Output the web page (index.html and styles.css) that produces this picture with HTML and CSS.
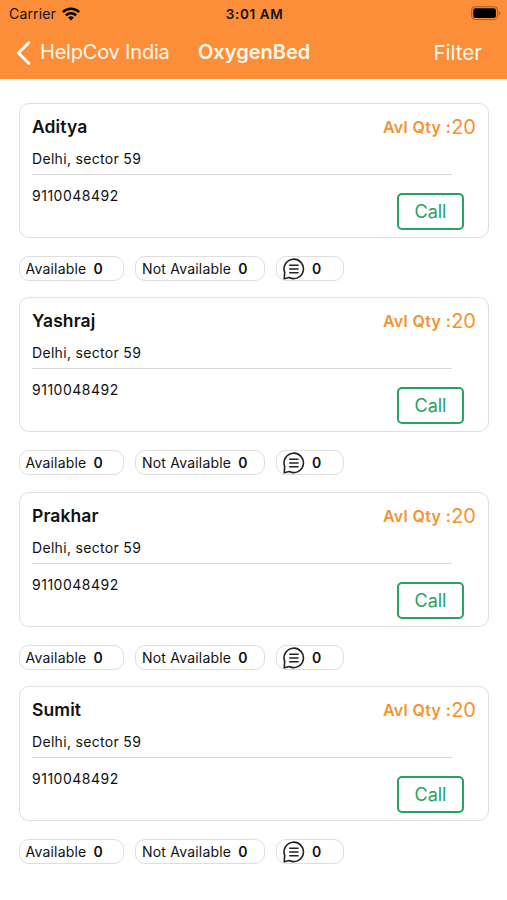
FILE: index.html
```html
<!DOCTYPE html>
<html lang="en">
<head>
<meta charset="utf-8">
<title>OxygenBed</title>
<link rel="stylesheet" href="styles.css">
</head>
<body>
<svg class="defs" width="0" height="0" aria-hidden="true">
  <symbol id="chat" viewBox="0 0 22 22">
    <path d="M1.2 20.8 1.7 14.4A9.7 9.7 0 1 1 6.3 19.5Z" fill="none" stroke="#222" stroke-width="1.6" stroke-linejoin="round"/>
    <path d="M6.2 7.2h9.4M6.2 11h9.4M6.2 14.8h9.4" fill="none" stroke="#222" stroke-width="1.5"/>
  </symbol>
</svg>
<header class="top">
  <div class="status">
    <div class="carrier"><span>Carrier</span>
      <svg width="18" height="14" viewBox="0 0 18 14"><g fill="none" stroke="#000" stroke-width="2.5"><path d="M.9 5.2a11.5 11.5 0 0 1 16.2 0"/><path d="M3.9 8.4a7.2 7.2 0 0 1 10.2 0"/></g><path d="M9 13.5 6.1 10.6a4.1 4.1 0 0 1 5.8 0Z"/></svg>
    </div>
    <span class="time">3:01 AM</span>
    <svg class="battery" width="30" height="15" viewBox="0 0 30 15"><rect x=".7" y=".7" width="25.8" height="12.8" rx="3.6" fill="none" stroke="#a65e27" stroke-width="1.1"/><rect x="2.3" y="2.3" width="22.6" height="9.6" rx="2"/><path d="M27.8 5v4.4q1.6-.7 1.6-2.2T27.8 5Z" fill="#a65e27"/></svg>
  </div>
  <nav class="nav">
    <a class="back"><svg width="15" height="24" viewBox="0 0 15 24"><path d="M12.8 1.7 2.4 12l10.4 10.3" fill="none" stroke="#fff" stroke-width="3" stroke-linecap="round" stroke-linejoin="round"/></svg><span>HelpCov India</span></a>
    <h1>OxygenBed</h1>
    <a class="filter">Filter</a>
  </nav>
</header>
<main class="list">
  <section class="entry">
    <article class="card">
      <div class="row"><h2>Aditya</h2><p class="qty"><b>Avl Qty :</b><span>20</span></p></div>
      <p class="place">Delhi, sector 59</p>
      <div class="row contact"><p class="phone">9110048492</p><button class="call">Call</button></div>
    </article>
    <div class="pills"><div class="pill yes">Available <b>0</b></div><div class="pill no">Not Available <b>0</b></div><div class="pill chat"><svg width="22" height="22"><use href="#chat"/></svg><b>0</b></div></div>
  </section>
  <section class="entry">
    <article class="card">
      <div class="row"><h2>Yashraj</h2><p class="qty"><b>Avl Qty :</b><span>20</span></p></div>
      <p class="place">Delhi, sector 59</p>
      <div class="row contact"><p class="phone">9110048492</p><button class="call">Call</button></div>
    </article>
    <div class="pills"><div class="pill yes">Available <b>0</b></div><div class="pill no">Not Available <b>0</b></div><div class="pill chat"><svg width="22" height="22"><use href="#chat"/></svg><b>0</b></div></div>
  </section>
  <section class="entry">
    <article class="card">
      <div class="row"><h2>Prakhar</h2><p class="qty"><b>Avl Qty :</b><span>20</span></p></div>
      <p class="place">Delhi, sector 59</p>
      <div class="row contact"><p class="phone">9110048492</p><button class="call">Call</button></div>
    </article>
    <div class="pills"><div class="pill yes">Available <b>0</b></div><div class="pill no">Not Available <b>0</b></div><div class="pill chat"><svg width="22" height="22"><use href="#chat"/></svg><b>0</b></div></div>
  </section>
  <section class="entry">
    <article class="card">
      <div class="row"><h2>Sumit</h2><p class="qty"><b>Avl Qty :</b><span>20</span></p></div>
      <p class="place">Delhi, sector 59</p>
      <div class="row contact"><p class="phone">9110048492</p><button class="call">Call</button></div>
    </article>
    <div class="pills"><div class="pill yes">Available <b>0</b></div><div class="pill no">Not Available <b>0</b></div><div class="pill chat"><svg width="22" height="22"><use href="#chat"/></svg><b>0</b></div></div>
  </section>
</main>
</body>
</html>
```
FILE: styles.css
```css
* { box-sizing: border-box; margin: 0; padding: 0; }
body { width: 507px; height: 900px; overflow: hidden; background: #fff; color: #111; font-family: Inter, "Liberation Sans", sans-serif; }
svg { display: block; flex: none; }
.defs { position: absolute; }
.top { height: 79px; background: #fc8e3a; color: #fff8ec; }
.status { display: grid; grid-template-columns: 1fr auto 1fr; align-items: center; height: 27px; padding: 0 6px 0 9px; color: #111; font-size: 14px; line-height: 27px; }
.carrier { display: flex; align-items: center; gap: 6px; letter-spacing: .15px; }
.carrier span { width: 47px; white-space: nowrap; }
.time { font-weight: 600; font-size: 13.5px; letter-spacing: .6px; margin-right: 1px; padding-top: 1px; line-height: 26px; }
.battery { justify-self: end; }
.nav { display: grid; grid-template-columns: 182px 1fr auto; align-items: center; height: 51px; padding: 0 25px 0 16px; font-size: 20px; line-height: 51px; white-space: nowrap; }
.back { display: flex; align-items: center; gap: 9px; letter-spacing: -.2px; }
.nav h1 { font-size: 20px; font-weight: 600; }
.filter { font-size: 20.5px; }
.list { padding: 24.3px 18px 0 19px; }
.entry { height: 194.2px; }
.card { height: 135px; width: 470px; border: 1px solid #dedede; border-radius: 10px; padding: 12px 12px 0; }
.row { display: flex; justify-content: space-between; }
.row h2 { font-size: 17.5px; font-weight: 600; line-height: 22px; letter-spacing: .1px; }
.qty { display: flex; line-height: 23px; color: #f6922e; }
.qty b { font-size: 16px; font-weight: 600; letter-spacing: .35px; }
.qty span { font-size: 20px; }
.place { width: 420px; height: 37px; padding-top: 11px; margin-top: -1px; border-bottom: 1px solid #d7d7d7; font-size: 14px; line-height: 20px; letter-spacing: .32px; }
.contact { padding-right: 12px; }
.phone { padding-top: 11px; font-size: 14px; line-height: 20px; letter-spacing: .5px; }
.call { width: 67px; height: 37px; margin-top: 18px; border: 2px solid #27a263; border-radius: 5px; background: #fff; color: #27a263; font: 18px/33px Inter, sans-serif; }
.pills { display: flex; margin-top: 18px; gap: 11px; font-size: 14px; line-height: 23px; letter-spacing: .2px; }
.pill { display: flex; gap: 7px; height: 25px; padding-left: 6px; border: 1px solid #dedede; border-radius: 10px; white-space: nowrap; }
.pill b { font-weight: 600; }
.yes { width: 105px; padding-left: 5.5px; }
.no { width: 130px; }
.chat { width: 68px; padding-left: 6px; }
.chat svg { margin-top: 1px; }
```
